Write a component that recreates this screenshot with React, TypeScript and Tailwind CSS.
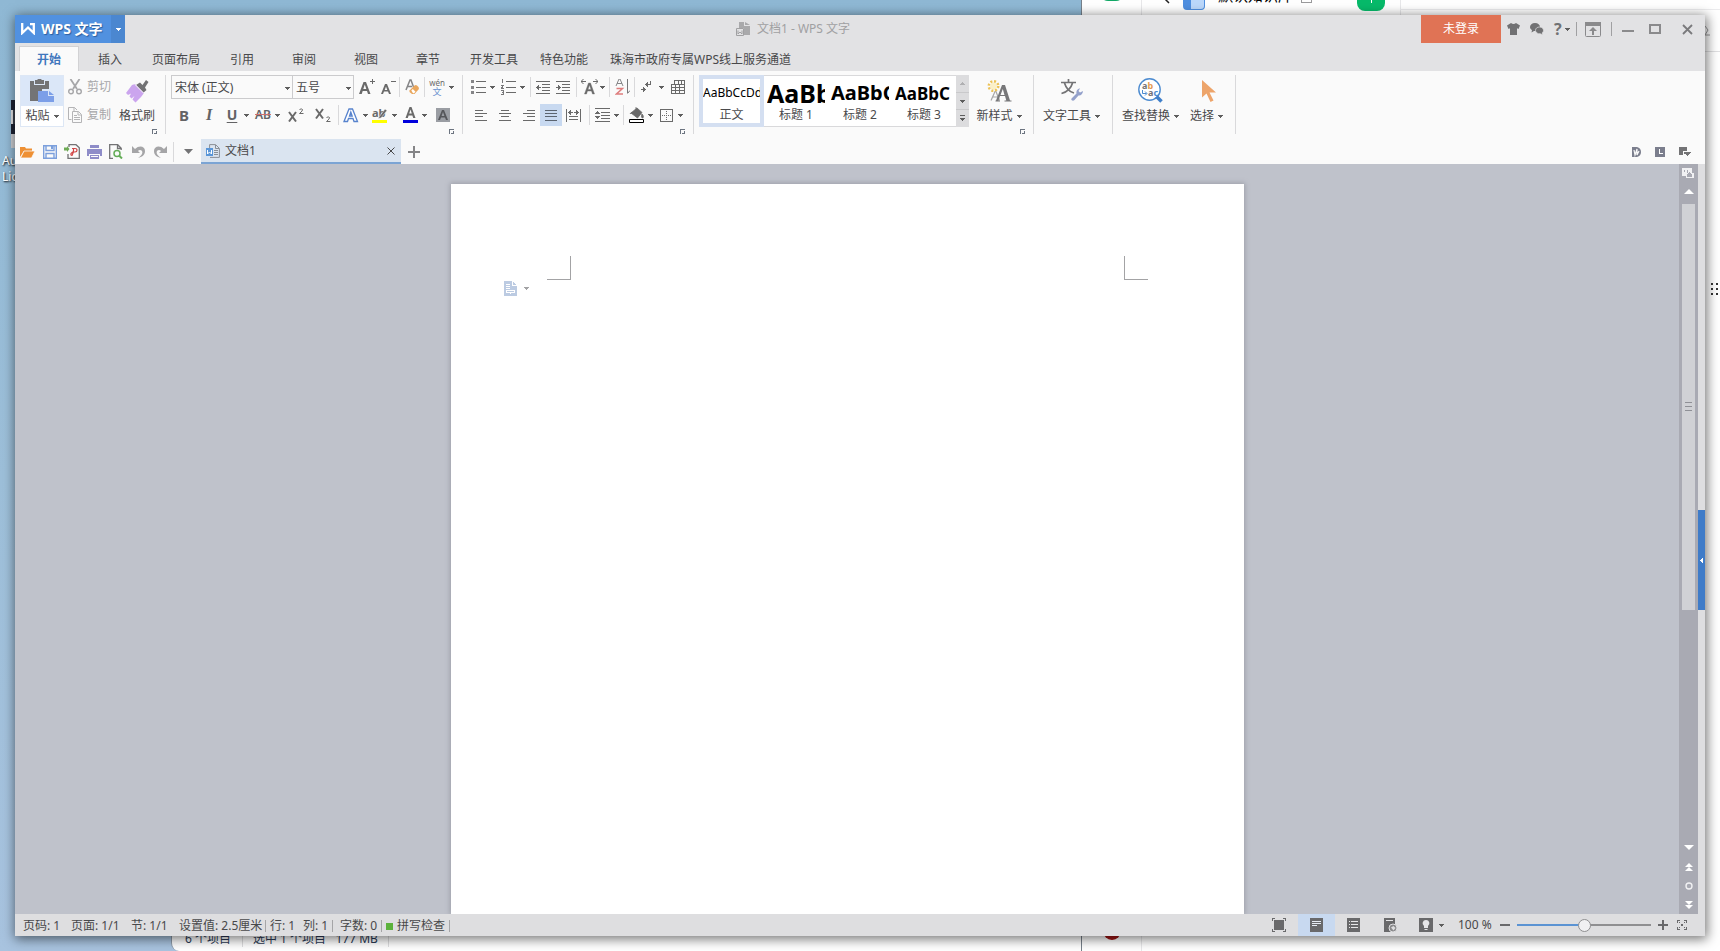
import type { ReactNode } from "react";

/* ---------- shared pieces ---------- */

type IconProps = { w: number; h: number; crisp?: boolean; className?: string; children: ReactNode };

function Icon({ w, h, crisp, className = "", children }: IconProps) {
  return (
    <svg
      width={w}
      height={h}
      viewBox={`0 0 ${w} ${h}`}
      fill="none"
      shapeRendering={crisp ? "crispEdges" : "auto"}
      className={`shrink-0 ${className}`}
      aria-hidden="true"
    >
      {children}
    </svg>
  );
}

function Caret({ className = "text-[#5e5e5e]" }: { className?: string }) {
  return (
    <Icon w={5} h={3} crisp className={className}>
      <path d="M0 0h5v1H0zM1 1h3v1H1zM2 2h1v1H2z" fill="currentColor" />
    </Icon>
  );
}

function Tool({ label, className = "", children }: { label: string; className?: string; children: ReactNode }) {
  return (
    <button aria-label={label} className={`flex h-[22px] w-[22px] shrink-0 items-center justify-center ${className}`}>
      {children}
    </button>
  );
}

function Drop({ label }: { label: string }) {
  return (
    <button aria-label={label} className="flex h-[22px] w-[7px] shrink-0 items-center justify-center">
      <Caret />
    </button>
  );
}

function Sep({ className = "" }: { className?: string }) {
  return <span className={`mx-px h-5 w-px shrink-0 bg-[#d9d9db] ${className}`} />;
}

function Launcher({ label }: { label: string }) {
  return (
    <button aria-label={label} className="mt-0.5 mr-2 flex h-[5px] self-end">
      <Icon w={5} h={5} crisp>
        <path d="M0 5V0h5v1H1v4zM4 2h1v3H2V4h2z" fill="#6c7480" />
      </Icon>
    </button>
  );
}

function Group({ className, launcher, children }: { className: string; launcher?: string; children: ReactNode }) {
  return (
    <section className={`flex h-[59px] shrink-0 flex-col border-r border-[#d9d9db] ${className}`}>
      {children}
      {launcher && <Launcher label={launcher} />}
    </section>
  );
}

function BigTool({ label, caret, className = "", children }: { label: string; caret?: boolean; className?: string; children: ReactNode }) {
  return (
    <button className={`flex h-[51px] shrink-0 flex-col items-center whitespace-nowrap ${className}`}>
      <span className="flex h-[31px] items-center justify-center">{children}</span>
      <span className="flex h-5 items-center gap-1">
        {label}
        {caret && <Caret />}
      </span>
    </button>
  );
}

/* ---------- title bar ---------- */

const tabs = ["插入", "页面布局", "引用", "审阅", "视图", "章节", "开发工具", "特色功能", "珠海市政府专属WPS线上服务通道"];

function TitleBar() {
  return (
    <header className="shrink-0 bg-[#e2e2e4]">
      <div className="flex h-7 items-stretch">
        <button className="flex w-24 shrink-0 items-center gap-1.5 bg-[#5191e0] pl-1.5 font-bold text-white">
          <Icon w={14} h={12}>
            <path d="M1.200 0v10L7 4.500l5.800 5.500V1H9" stroke="#fff" strokeWidth="2.300" />
          </Icon>
          <span className="text-sm whitespace-nowrap [text-shadow:1px_1px_1px_#2b5f9f]">WPS 文字</span>
        </button>
        <button aria-label="应用菜单" className="flex w-3.5 shrink-0 items-center justify-center bg-[#4b87d0]">
          <Caret className="text-white" />
        </button>
        <div className="flex flex-1 items-center justify-center gap-[7px] pl-10 text-[#a0a0a2]">
          <Icon w={14} h={14}>
            <path d="M3 0h5v4h3v9H8V6H3z" fill="#a9a9ab" />
            <path d="M9 0v3h5zM9 4h5v9H9z" fill="#a9a9ab" />
            <path d="M.5 6.500h7v7h-7z" fill="#e2e2e4" stroke="#a0a0a2" />
            <path d="M2 8.500v3.500l2-2 2 2V8.500" stroke="#a0a0a2" />
          </Icon>
          <h1>文档1 - WPS 文字</h1>
        </div>
        <button className="w-20 shrink-0 bg-[#e07355] text-white">未登录</button>
        <div className="flex w-[204px] shrink-0 items-center pl-1.5">
          <button aria-label="皮肤">
            <Icon w={13} h={12}>
              <path d="M4 0q2.500 2.200 5 0l4 2.500-1.500 3.500-1.500-.8V12H3V5.200L1.500 6 0 2.500z" fill="#717173" />
            </Icon>
          </button>
          <button aria-label="反馈" className="ml-2.5">
            <Icon w={14} h={12}>
              <path d="M5 0c3 0 5 1.800 5 4S8 8 5 8L4 7.900 1.500 9.500 2 7C.8 6.400 0 5.300 0 4c0-2.200 2-4 5-4z" fill="#717173" />
              <path d="M9.500 4c2.500 0 4 1.500 4 3.400 0 1-.5 1.900-1.300 2.500l.3 2.100-2-1.200C7.800 11 5.500 9.600 5.500 7.400S7.300 4 9.500 4z" fill="#717173" stroke="#e2e2e4" strokeWidth=".7" />
            </Icon>
          </button>
          <button aria-label="帮助" className="ml-2.5 flex items-center gap-[3px] text-base font-bold text-[#717173]">
            ?<Caret />
          </button>
          <span className="ml-1.5 h-3.5 w-px bg-[#a0a0a2]" />
          <button aria-label="隐藏功能区" className="ml-2">
            <Icon w={16} h={15}>
              <rect x=".5" y=".5" width="15" height="14" rx="1" stroke="#8a8a8c" />
              <path d="M0 0h16v4H0zM7 13V9H4l4-4 4 4H9v4z" fill="#8a8a8c" />
            </Icon>
          </button>
          <span className="ml-2.5 h-3.5 w-px bg-[#a0a0a2]" />
          <button aria-label="最小化" className="ml-2.5">
            <Icon w={12} h={10} crisp><path d="M0 6h12v2H0z" fill="#8a8a8c" /></Icon>
          </button>
          <button aria-label="最大化" className="ml-[15px]">
            <Icon w={12} h={10} crisp><path d="M1 1h10v8H1z" stroke="#8a8a8c" strokeWidth="2" /></Icon>
          </button>
          <button aria-label="关闭" className="ml-[21px]">
            <Icon w={11} h={11}><path d="m1 1 9 9M10 1l-9 9" stroke="#7a7a7c" strokeWidth="1.800" /></Icon>
          </button>
        </div>
      </div>
      <nav className="flex h-7 items-end overflow-hidden pl-1">
        <button className="h-[25px] w-[60px] shrink-0 border border-b-0 border-[#d2d2d4] bg-[#fafafa] pt-0.5 font-bold text-[#3f77bd]">开始</button>
        {tabs.map((t) => (
          <button key={t} className="h-[25px] min-w-[62px] shrink-0 px-[11px] pt-0.5 whitespace-nowrap">
            {t}
          </button>
        ))}
      </nav>
    </header>
  );
}

/* ---------- ribbon ---------- */

function ClipboardGroup() {
  return (
    <Group className="w-[151px]" launcher="剪贴板设置">
      <div className="flex h-[52px] pl-[5px]">
        <button className="flex h-[52px] w-[44px] flex-col items-center border border-[#dde7f5] bg-white">
          <span className="flex h-[30px] w-full items-center justify-center bg-[#dbe7f8]">
            <Icon w={26} h={24}>
              <path d="M1 2h4v4h11V2h4v8h-7v12H1z" fill="#737375" />
              <path d="M6 1h2.500a2 2 0 0 1 4 0H15v4H6z" fill="#737375" />
              <path d="M9 12h10v5h6v6H9z" fill="#7c9fe8" />
              <path d="M20 12l5 4h-5z" fill="#7c9fe8" />
            </Icon>
          </span>
          <span className="flex h-5 items-center gap-1 whitespace-nowrap">粘贴 <Caret /></span>
        </button>
        <div className="ml-1 flex w-12 flex-col gap-1 text-[#a7a7a9]">
          <button className="flex h-6 items-center gap-[5px] whitespace-nowrap">
            <Icon w={14} h={16}>
              <path d="M2.500 0 9 10M11.500 0 5 10" stroke="#a7a7a9" strokeWidth="1.800" />
              <circle cx="3" cy="12.500" r="2.300" stroke="#a7a7a9" strokeWidth="1.400" />
              <circle cx="11" cy="12.500" r="2.300" stroke="#a7a7a9" strokeWidth="1.400" />
            </Icon>
            剪切
          </button>
          <button className="flex h-6 items-center gap-[5px] whitespace-nowrap">
            <Icon w={14} h={16}>
              <path d="M3.500 12.500h-3V.5h6l2.500 2.500M6 .5V4" stroke="#b4b4b6" />
              <path d="M4.500 4.500h6l3 3v8h-9zM6 8.500h3M6 10.500h6M6 12.500h6M10 4.500V8h3" stroke="#b4b4b6" />
            </Icon>
            复制
          </button>
        </div>
        <BigTool label="格式刷" className="w-[42px]">
          <Icon w={24} h={24}>
            <path d="m11 6 4-2.500L17.500 6l3.500-5 2.500 2-3.500 5.500L21.500 11 18 14z" fill="#737375" />
            <path d="m7 6 3-1 9 9-3 4-5.500 5.500-3-3 2-3.500-3 2.500-2-2 1.500-3-3 1.500L1 14z" fill="#cba5ee" />
            <path d="m10 5.500 9 9" stroke="#fafafa" />
          </Icon>
        </BigTool>
      </div>
    </Group>
  );
}

function FontGroup() {
  return (
    <Group className="w-[297px] pl-[5px]" launcher="字体设置">
      <div className="flex flex-col gap-1">
        <div className="flex h-6 items-center">
          <label className="relative flex">
            <select aria-label="字体" className="h-6 w-[122px] appearance-none border border-[#cbcbcd] bg-[#fafafa] pt-px pl-[3px]">
              <option>宋体 (正文)</option>
            </select>
            <span className="pointer-events-none absolute top-3 right-[3px] flex"><Caret /></span>
          </label>
          <label className="relative -ml-px flex">
            <select aria-label="字号" className="h-6 w-[62px] appearance-none border border-[#cbcbcd] bg-[#fafafa] pt-px pl-[3px]">
              <option>五号</option>
            </select>
            <span className="pointer-events-none absolute top-3 right-[3px] flex"><Caret /></span>
          </label>
          <Tool label="增大字号" className="ml-0.5">
            <Icon w={16} h={18}>
              <path d="M0 16 4.500 4H7l4.500 12H9l-1-3H3.700l-1 3zM4.300 11h3L5.800 6.500z" fill="#6a6a6a" />
              <path d="M11 3.500h5M13.500 1v5" stroke="#6a6a6a" />
            </Icon>
          </Tool>
          <Tool label="减小字号" className="-mx-px">
            <Icon w={15} h={16}>
              <path d="M0 15 4 5h2l4 10H8l-1-2.500H3L2 15zM3.700 11h2.600L5 7.500z" fill="#6a6a6a" />
              <path d="M10 2.500h5" stroke="#6a6a6a" />
            </Icon>
          </Tool>
          <Sep />
          <Tool label="清除格式">
            <Icon w={15} h={16}>
              <path d="m1 11 4-10h1l2.500 7M2.500 7.500H7" stroke="#858587" strokeWidth="1.500" />
              <path d="m4.500 11.500 5-5a2 2 0 0 1 2.500 0l1.500 1.500a2 2 0 0 1 0 2.500l-4 4.500H7l-2.500-2z" fill="#e9a65c" />
              <path d="m6.300 11.500 1.500-1.500 2.700 2.700-1.500 1.500H8z" fill="#fff" />
            </Icon>
          </Tool>
          <Sep />
          <Tool label="拼音指南">
            <span className="flex flex-col items-center text-[#6a6a6a]">
              <span className="text-[8px] leading-[8px]">wén</span>
              <span className="text-[9px] leading-[9px] text-[#6b93d0]">文</span>
            </span>
          </Tool>
          <Drop label="拼音选项" />
        </div>
        <div className="flex h-6 items-center text-base leading-none font-bold text-[#636365]">
          <Tool label="加粗" className="ml-0.5 text-[15px]">B</Tool>
          <Tool label="倾斜" className="ml-[3px]"><i className="font-['Liberation_Serif',serif] font-bold">I</i></Tool>
          <Tool label="下划线" className="ml-px text-sm underline underline-offset-2">U</Tool>
          <Drop label="下划线选项" />
          <Tool label="删除线" className="ml-0.5 text-xs font-semibold line-through decoration-[#d07070]">AB</Tool>
          <Drop label="删除线选项" />
          <Tool label="上标" className="ml-1">
            <Icon w={16} h={14}>
              <path d="m1 4 7 9.500M8 4l-7 9.500" stroke="#6a6a6a" strokeWidth="2" />
              <path d="M11.500 1.500q2-1.200 3 0 .5 1.200-3 4h4" stroke="#6a6a6a" />
            </Icon>
          </Tool>
          <Tool label="下标" className="mr-[3px] ml-[5px]">
            <Icon w={16} h={14}>
              <path d="m1 1 7 9.500M8 1l-7 9.500" stroke="#6a6a6a" strokeWidth="2" />
              <path d="M11.500 9.500q2-1.200 3 0 .5 1.200-3 4h4" stroke="#6a6a6a" />
            </Icon>
          </Tool>
          <Sep />
          <Tool label="文字效果">
            <Icon w={16} h={15}>
              <path d="M1 13.500 6 1h3.500l5 12.500H11l-1-3H5.500l-1 3zM6.500 8h2.700L7.800 4z" fill="#fff" stroke="#5783cd" strokeWidth="1.300" />
            </Icon>
          </Tool>
          <Drop label="文字效果选项" />
          <Tool label="突出显示">
            <Icon w={16} h={16}>
              <text x="0" y="10" fontSize="11" fontWeight="700" fill="#6a6a6a">ab</text>
              <path d="m7 10 6-8 2 1.500-6 7.500-3 .5z" fill="#6a6a6a" stroke="#fafafa" strokeWidth=".5" />
              <path d="M0 13h15v3H0z" fill="#ffff00" />
            </Icon>
          </Tool>
          <Drop label="突出显示颜色" />
          <Tool label="字体颜色" className="ml-px">
            <Icon w={15} h={16}>
              <path d="M2.500 11 6.500 0h2l4 11h-2.300l-.8-2.500H5.600L4.800 11zM6.200 6.500h2.600L7.500 2.500z" fill="#6a6a6a" />
              <path d="M0 13h15v3H0z" fill="#0000dc" />
            </Icon>
          </Tool>
          <Drop label="字体颜色选项" />
          <Tool label="字符底纹" className="ml-1">
            <Icon w={14} h={14}>
              <path d="M0 0h14v14H0z" fill="#9a9da3" />
              <path d="M2 12 6 2h2l4 10h-2L9 9.500H5L4 12zM5.600 8h2.800L7 4z" fill="#55565a" />
            </Icon>
          </Tool>
        </div>
      </div>
    </Group>
  );
}

const G = "#6a6a6a";

function ParagraphGroup() {
  return (
    <Group className="w-[231px]" launcher="段落设置">
      <div className="flex flex-col gap-1">
        <div className="flex h-6 items-center">
          <Tool label="项目符号" className="ml-1">
            <Icon w={15} h={14} crisp>
              <path d="M5 1h10v1H5zM5 7h10v1H5zM5 12h10v1H5z" fill={G} />
              <path d="M0 0h3v3H0zM0 6h3v3H0zM0 11h3v3H0z" fill="#858587" />
            </Icon>
          </Tool>
          <Drop label="项目符号选项" />
          <Tool label="编号" className="ml-px">
            <Icon w={15} h={16} crisp>
              <path d="M5 2h10v1H5zM5 8h10v1H5zM5 13h10v1H5z" fill={G} />
              <path d="M1 0h1v4H1zM0 6h3v1H2v2h1v1H0V8h1V7H0zM0 11h3v5H0v-1h2v-1H1v-1h1v-1H0z" fill="#777779" />
            </Icon>
          </Tool>
          <Drop label="编号选项" />
          <Sep className="ml-1" />
          <Tool label="减少缩进" className="-mr-px">
            <Icon w={14} h={13} crisp>
              <path d="M0 0h14v1H0zM6 3h8v1H6zM6 6h8v1H6zM6 9h8v1H6zM0 12h14v1H0zM0 6h5v1H0zM1 5h1v3H1zM2 4h1v5H2z" fill={G} />
            </Icon>
          </Tool>
          <Tool label="增加缩进" className="-mx-px">
            <Icon w={14} h={13} crisp>
              <path d="M0 0h14v1H0zM6 3h8v1H6zM6 6h8v1H6zM6 9h8v1H6zM0 12h14v1H0zM0 6h5v1H0zM3 5h1v3H3zM2 4h1v5H2z" fill={G} />
            </Icon>
          </Tool>
          <Sep className="ml-[3px]" />
          <Tool label="中文版式" className="-mr-px">
            <Icon w={17} h={16}>
              <path d="m3.500 15 4-11h2l4 11h-2l-1-3h-4l-1 3zM7 10.500h3L8.500 6z" fill={G} stroke={G} strokeWidth=".4" />
              <path d="M0 2.500h5M2.500 0 0 2.500 2.500 5M12 2.500h5M14.500 0 17 2.500 14.500 5" stroke={G} />
            </Icon>
          </Tool>
          <Drop label="中文版式选项" />
          <Sep className="ml-[3px]" />
          <Tool label="排序">
            <Icon w={15} h={16}>
              <path d="m1 7 3-7h1l3 7M2 4.500h5" stroke="#858587" />
              <path d="M1.500 9.500h6L1.500 15H8" stroke="#de7d7d" strokeWidth="1.500" />
              <path d="M12.500 0v14M12.500 14.500l2.500-3" stroke="#777779" />
            </Icon>
          </Tool>
          <Sep />
          <Tool label="显示段落标记">
            <Icon w={12} h={14} crisp>
              <path d="M9 1h1v4H5V4h4zM4 4h1v1H4zM5 3h1v3H5zM6 2h1v5H6zM0 9h5v1H0zM2 7h1v5H2zM3 8h1v3H3z" fill={G} />
            </Icon>
          </Tool>
          <Drop label="段落标记选项" />
          <Tool label="表格" className="ml-0.5">
            <Icon w={14} h={14} crisp>
              <path d="M3 0h11v14H0V4h3zM4 1v3h3V1zM8 1v3h2V1zM11 1v3h2V1zM1 5v2h3V5zM5 5v2h3V5zM9 5v2h4V5zM1 8v2h3V8zM5 8v2h3V8zM9 8v2h4V8zM1 11v2h3v-2zM5 11v2h3v-2zM9 11v2h4v-2z" fill={G} fillRule="evenodd" />
            </Icon>
          </Tool>
        </div>
        <div className="flex h-6 items-center">
          <Tool label="左对齐" className="ml-[7px]">
            <Icon w={12} h={11} crisp><path d="M0 0h8v1H0zM0 3h12v1H0zM0 6h8v1H0zM0 10h12v1H0z" fill={G} /></Icon>
          </Tool>
          <Tool label="居中" className="ml-0.5">
            <Icon w={12} h={11} crisp><path d="M2 0h8v1H2zM0 3h12v1H0zM2 6h8v1H2zM0 10h12v1H0z" fill={G} /></Icon>
          </Tool>
          <Tool label="右对齐" className="ml-0.5">
            <Icon w={12} h={11} crisp><path d="M4 0h8v1H4zM0 3h12v1H0zM4 6h8v1H4zM0 10h12v1H0z" fill={G} /></Icon>
          </Tool>
          <Tool label="两端对齐" className="bg-[#c8d9f0]">
            <Icon w={12} h={11} crisp><path d="M0 0h12v1H0zM0 3h12v1H0zM0 6h12v1H0zM0 10h12v1H0z" fill="#5b6470" /></Icon>
          </Tool>
          <Tool label="分散对齐">
            <Icon w={15} h={13} crisp>
              <path d="M0 0h1v13H0zM14 0h1v13h-1zM2 3h5v1H2zM8 3h5v1H8zM3 2h1v3H3zM4 1h1v5H4zM11 2h1v3h-1zM10 1h1v5h-1zM3 7h9v1H3zM3 10h9v1H3z" fill={G} />
            </Icon>
          </Tool>
          <Sep className="ml-[5px]" />
          <Tool label="行距">
            <Icon w={15} h={14} crisp>
              <path d="M0 0h15v1H0zM6 4h9v1H6zM6 7h9v1H6zM6 10h9v1H6zM0 13h15v1H0zM2 3h1v3H2zM1 4h3v1H1zM0 5h5v1H0zM0 8h5v1H0zM1 9h3v1H1zM2 10h1v1H2z" fill={G} />
            </Icon>
          </Tool>
          <Drop label="行距选项" />
          <Sep className="ml-[3px]" />
          <Tool label="底纹颜色">
            <Icon w={15} h={16}>
              <path d="m2 6 6-5 5 4.500L8.500 11zM1 7c1-2 2.500-2 3-1M13 7c2 2 1.500 4 .5 4S12 9 13 7zM7 0v4" fill={G} stroke={G} strokeWidth=".8" />
              <path d="M.5 12.500h14v3H.5z" fill="#fff" stroke="#000" />
            </Icon>
          </Tool>
          <Drop label="底纹选项" />
          <Tool label="边框" className="ml-px">
            <Icon w={13} h={13} crisp>
              <path d="M0 0h13v13H0zM1 1v11h11V1z" fill={G} fillRule="evenodd" />
              <path d="M6 2h1v1H6zM6 4h1v1H6zM6 6h1v1H6zM6 8h1v1H6zM6 10h1v1H6zM2 6h1v1H2zM4 6h1v1H4zM8 6h1v1H8zM10 6h1v1h-1z" fill={G} />
            </Icon>
          </Tool>
          <Drop label="边框选项" />
        </div>
      </div>
    </Group>
  );
}

const headings = [
  { name: "标题 1", sample: "AaBb", size: "text-[25px]" },
  { name: "标题 2", sample: "AaBbC", size: "text-xl" },
  { name: "标题 3", sample: "AaBbC", size: "text-[17px]" },
];

function StylesGroup() {
  return (
    <Group className="w-[340px] pl-[5px]" launcher="样式设置">
      <div className="flex h-[52px]">
        <div className="flex h-[52px] shrink-0 text-black">
          <button className="flex w-[65px] flex-col items-center overflow-hidden border-4 border-[#d4dff1] bg-white">
            <span className="flex h-[28px] w-full items-center whitespace-nowrap">AaBbCcDd</span>
            <span className="flex h-4 items-center text-[#4a4a4c]">正文</span>
          </button>
          {headings.map((h) => (
            <button key={h.name} className="flex w-16 flex-col items-center border-y border-[#d9d9db] bg-white px-[3px] pt-[3px]">
              <span className={`flex h-[28px] w-full items-center overflow-hidden leading-none font-bold whitespace-nowrap ${h.size}`}>{h.sample}</span>
              <span className="flex h-4 items-center text-[#4a4a4c]">{h.name}</span>
            </button>
          ))}
          <div className="flex w-[13px] flex-col gap-px bg-[#c9c9cb]">
            <button aria-label="上一行" className="flex flex-1 items-center justify-center bg-[#dcdcde]">
              <Icon w={5} h={3} crisp><path d="M2 0h1v1H2zM1 1h3v1H1zM0 2h5v1H0z" fill="#b0b0b2" /></Icon>
            </button>
            <button aria-label="下一行" className="flex flex-1 items-center justify-center bg-[#dcdcde]"><Caret /></button>
            <button aria-label="更多样式" className="flex flex-1 items-center justify-center bg-[#dcdcde]">
              <Icon w={5} h={7} crisp><path d="M0 0h5v1H0zM0 3h5v1H0zM1 4h3v1H1zM2 5h1v1H2z" fill="#5e5e5e" /></Icon>
            </button>
          </div>
        </div>
        <BigTool label="新样式" caret className="ml-[5px] w-[50px]">
          <Icon w={25} h={22}>
            <path d="m4 20.500 4-9h1l3.500 9M6 17h5" stroke="#a5a5a7" strokeWidth="1.200" />
            <path d="M9 20.500 15 5h3l5 15.500h1.500v1h-7v-1h1.800L18 16h-5l-1.500 4.500h1.500v1H8.500v-1zM13.500 15h4L15.800 9z" fill="#777779" />
            <circle cx="6.500" cy="6" r="3.500" fill="#fbf0c8" />
            <circle cx="6.500" cy="6" r="4.800" stroke="#ecc255" strokeWidth="2.400" strokeDasharray="2 1.770" />
          </Icon>
        </BigTool>
      </div>
    </Group>
  );
}

function Ribbon() {
  return (
    <div className="flex h-[68px] shrink-0 overflow-hidden bg-[#fafafa] pt-1">
      <ClipboardGroup />
      <FontGroup />
      <ParagraphGroup />
      <StylesGroup />
      <Group className="w-[79px] pl-[9px]">
        <BigTool label="文字工具" caret className="self-start">
          <Icon w={24} h={24}>
            <path d="M1 3.500h15M8.500 0v3M12.500 4C11 9.500 7 13 1.500 14.500M4.500 4C6 9 10 13 14 14" stroke="#737375" strokeWidth="1.700" />
            <path d="m12 19 4.500-4.500c-.5-2.500 1-5 3.500-5l-1.500 2.500 1.500 1.500 3-1.500c0 3-2.500 5-4.500 4.500L14.500 21q-1.500 1.500-3 0-.8-1 .5-2z" fill="#94a1cb" />
          </Icon>
        </BigTool>
      </Group>
      <Group className="w-[123px]">
        <div className="flex gap-[11px] pl-[9px]">
          <BigTool label="查找替换" caret>
            <Icon w={25} h={25}>
              <circle cx="11.500" cy="11.500" r="10.700" fill="#fff" stroke="#4c8bd0" strokeWidth="1.400" />
              <path d="m18.500 18.500 5 5" stroke="#3f7fc9" strokeWidth="3.500" />
              <text x="4" y="11" fontSize="9" fontWeight="700" fill="#737375">
                a<tspan fill="#e49a50">b</tspan>
              </text>
              <path d="M4.500 12v3.500h4M7 13.500l2 2-2 2" stroke="#4c8bd0" />
              <text x="10" y="18" fontSize="9" fontWeight="700" fill="#737375">
                a<tspan fill="#4c8bd0">c</tspan>
              </text>
            </Icon>
          </BigTool>
          <BigTool label="选择" caret>
            <Icon w={14} h={22} className="ml-[5px]">
              <path d="M0 0v17.500l4.500-4 4 8.500 3-1.500-4-8H14z" fill="#eda46a" />
            </Icon>
          </BigTool>
        </div>
      </Group>
    </div>
  );
}

/* ---------- quick access and document tabs ---------- */

function QuickBar() {
  return (
    <div className="flex h-[25px] shrink-0 items-center bg-[#fafafa] pl-0.5">
      <Tool label="打开" className="-ml-px">
        <Icon w={15} h={12}>
          <path d="M0 11V1h5l1 1.500h6V5H4z" fill="#ee9034" />
          <path d="M4 5h11l-3.500 7H.5z" fill="#ee9034" stroke="#fafafa" strokeWidth=".8" />
        </Icon>
      </Tool>
      <Tool label="保存" className="ml-px">
        <Icon w={14} h={14}>
          <path d="M.7.700h12.600v12.600H.7zM3 .7v4.800h8V.700M3 13V8.500h8V13" stroke="#7b9fdc" strokeWidth="1.400" />
          <path d="M8 1h2v3H8z" fill="#7b9fdc" />
        </Icon>
      </Tool>
      <Tool label="输出PDF">
        <Icon w={16} h={15}>
          <path d="M5 3V.7h7l3.300 3v10.600H4V10" stroke="#737375" strokeWidth="1.300" />
          <path d="M8 4.500h3q2 0 2 1.700T11 8H8.500L7 9.500q-.5 2 1 2L9.500 8V4.500" stroke="#d04545" strokeWidth="1.200" />
          <path d="M0 3.500h3V2l2.500 3L3 8V6.500H0z" fill="#6eaa55" />
        </Icon>
      </Tool>
      <Tool label="打印">
        <Icon w={15} h={14}>
          <path d="M3 0h9v3H3zM0 4h15v7h-2V9H2v2H0zM3 10h9v4H3z" fill="#8e8cc8" />
          <path d="M4 11.500h7" stroke="#fafafa" />
        </Icon>
      </Tool>
      <Tool label="打印预览">
        <Icon w={14} h={15}>
          <path d="M4 14.300H.7V.700h8l3.500 3.500V6M8.500 1v3.500H12" stroke="#737375" strokeWidth="1.300" />
          <circle cx="8" cy="9.500" r="3" stroke="#65ad58" strokeWidth="1.500" />
          <path d="m10 11.500 3 3" stroke="#65ad58" strokeWidth="2" />
        </Icon>
      </Tool>
      <Tool label="撤销">
        <Icon w={13} h={13}>
          <path d="M3 4c4-4 10-3 10 2 0 4-3 6-7 7 4-3 5-5 4-7-1-1.500-3-1.500-4 0L8 8H0V1z" fill="#a5a5a7" />
        </Icon>
      </Tool>
      <Tool label="恢复">
        <Icon w={13} h={13}>
          <path d="M10 4C6 0 0 1 0 6c0 4 3 6 7 7-4-3-5-5-4-7 1-1.500 3-1.500 4 0L5 8h8V1z" fill="#a5a5a7" />
        </Icon>
      </Tool>
      <Sep className="ml-0.5" />
      <button aria-label="自定义快速访问" className="flex w-[26px] items-center justify-center">
        <Icon w={9} h={5}><path d="M0 0h9L4.500 5z" fill="#737375" /></Icon>
      </button>
      <div className="flex h-[25px] w-[200px] items-center border-b-2 border-[#7ba4d4] bg-[#dae4f0] pt-px pr-1.5 pl-[5px]">
        <Icon w={14} h={14}>
          <path d="M3.600 4V.600h6l3.800 3.800v9H4M9.500 1v3.500H13M8 6.500h4M8 8.500h4M8 10.500h4" stroke="#8a8f96" />
          <path d="M0 4h7v8H0z" fill="#5a96d8" />
          <path d="M1.500 6v4l2-2 2 2V6" stroke="#fff" />
        </Icon>
        <a href="#doc" className="ml-[5px] flex-1 text-[#4a4a4c]">文档1</a>
        <button aria-label="关闭文档">
          <Icon w={8} h={8}><path d="m.5.500 7 7M7.500.500l-7 7" stroke="#48484a" /></Icon>
        </button>
      </div>
      <button aria-label="新建" className="ml-[7px]">
        <Icon w={12} h={12} crisp><path d="M5 0h2v12H5zM0 5h12v2H0z" fill="#858587" /></Icon>
      </button>
      <div className="ml-auto flex items-center gap-[14px] pr-3.5">
        <button aria-label="文档">
          <Icon w={9} h={10}>
            <path d="M0 0h5q4 1 4 5t-4 5H0z" fill="#7b7e8d" />
            <path d="m2 3 1 5 2-6 0 6 2-4" stroke="#fafafa" strokeWidth="1.200" />
          </Icon>
        </button>
        <button aria-label="历史">
          <Icon w={10} h={10} crisp><path d="M0 0h10v10H0z" fill="#7b7e8d" /><path d="M4 2h1v4h3v1H4z" fill="#fff" /></Icon>
        </button>
        <button aria-label="窗口列表">
          <Icon w={12} h={10} crisp><path d="M0 0h8v4H4v4H0zM5 5h7v1h-1v1h-1v1H9v1H8V8H7V7H5z" fill="#737375" /></Icon>
        </button>
      </div>
    </div>
  );
}

/* ---------- document area ---------- */

function Workspace() {
  return (
    <div className="flex min-h-0 flex-1 bg-[#bfc2cb]">
      <main id="doc" className="flex min-w-0 flex-1 justify-center overflow-hidden pt-5 pl-px">
        <article className="w-[793px] bg-white shadow-[0_0_5px_1px_#9c9fa9]">
          <div className="flex justify-between px-24 pt-[72px]">
            <span className="h-6 w-6 border-r border-b border-[#a3a3a5]" />
            <span className="h-6 w-6 border-b border-l border-[#a3a3a5]" />
          </div>
          <button aria-label="段落布局" className="mt-px ml-[53px] flex items-center gap-[7px]">
            <Icon w={13} h={15} crisp>
              <path d="M0 0h8v5h5v10H0zM9 1h1v1h1v1h1v1H9z" fill="#bccbe2" />
              <path d="M2 3h4v1H2zM2 5h4v1H2zM2 7h4v1H2zM2 9h9v3H7v1H6v-1H2zM3 10v1h7v-1z" fill="#fff" fillRule="evenodd" />
            </Icon>
            <Caret className="text-[#a3a3a5]" />
          </button>
        </article>
      </main>
      <div className="flex w-[19px] shrink-0 flex-col items-center bg-[#a9aab3] pt-1">
        <button aria-label="标尺" className="mr-0.5">
          <Icon w={12} h={11} crisp>
            <path d="M0 0h10v5h2v5H4V8H0zM2 2v2h1V2zM5 2v3h1V2z" fill="#f1f1f3" fillRule="evenodd" />
            <path d="M7 4h1v1h1v1h1v3H5V6h1V5h1z" fill="#a9aab3" />
          </Icon>
        </button>
        <button aria-label="向上滚动" className="mt-2.5">
          <Icon w={10} h={5}><path d="M0 5 5 0l5 5z" fill="#fff" /></Icon>
        </button>
        <div className="mt-[10px] w-[13px] flex-1">
          <div className="flex h-[64%] flex-col items-center justify-center gap-[3px] bg-[#d0d1d5]">
            <span className="h-px w-[7px] bg-[#8f9096]" />
            <span className="h-px w-[7px] bg-[#8f9096]" />
            <span className="h-px w-[7px] bg-[#8f9096]" />
          </div>
        </div>
        <button aria-label="向下滚动" className="flex h-[19px] items-center">
          <Icon w={10} h={5}><path d="M0 0h10L5 5z" fill="#fff" /></Icon>
        </button>
        <button aria-label="上一页" className="flex h-[19px] items-center">
          <Icon w={8} h={8}><path d="M0 4 4 0l4 4zM0 8l4-4 4 4z" fill="#fff" /></Icon>
        </button>
        <button aria-label="选择浏览对象" className="flex h-[19px] items-center">
          <Icon w={8} h={8}><circle cx="4" cy="4" r="3" stroke="#f1f1f3" strokeWidth="1.400" /></Icon>
        </button>
        <button aria-label="下一页" className="flex h-[19px] items-center">
          <Icon w={8} h={8}><path d="M0 0h8L4 4zM0 4h8L4 8z" fill="#fff" /></Icon>
        </button>
      </div>
      <div className="flex w-[7px] shrink-0 flex-col bg-[#dedee0] pt-[346px]">
        <button aria-label="展开任务窗格" className="flex h-[100px] items-center justify-center bg-[#3e7bc8]">
          <Icon w={3} h={5} crisp><path d="M2 0h1v5H2V4H1V3H0V2h1V1h1z" fill="#fff" /></Icon>
        </button>
      </div>
    </div>
  );
}

/* ---------- status bar ---------- */

function Bar() {
  return <span className="h-3 w-px shrink-0 bg-[#a5a5a7]" />;
}

function StatusBar() {
  return (
    <footer className="flex h-[22px] shrink-0 items-center justify-between bg-[#dedee0] pl-2 whitespace-nowrap">
      <div className="flex items-center pt-0.5">
        <span className="w-12">页码: 1</span>
        <span className="w-[60px]">页面: 1/1</span>
        <span className="w-12">节: 1/1</span>
        <span className="w-[86px]">设置值: 2.5厘米</span>
        <Bar />
        <span className="ml-1 w-[33px]">行: 1</span>
        <span className="w-[29px]">列: 1</span>
        <Bar />
        <span className="ml-[7px] w-[41px]">字数: 0</span>
        <Bar />
        <button className="mx-1 flex w-[59px] items-center gap-1">
          <span className="h-[7px] w-[7px] bg-[#5cb23c]" />
          拼写检查
        </button>
        <Bar />
      </div>
      <div className="flex h-full items-center">
        <button aria-label="全屏显示" className="mr-3">
          <Icon w={14} h={14} crisp>
            <path d="M2 2h10v10H2z" fill="#69696b" />
            <path d="M0 3V0h3v1H1v2zM11 0h3v3h-1V1h-2zM0 11h1v2h2v1H0zM13 11h1v3h-3v-1h2z" fill="#69696b" />
          </Icon>
        </button>
        <button aria-label="页面视图" className="flex h-full w-[37px] items-center justify-center bg-[#c8d9f0]">
          <Icon w={13} h={14} crisp><path d="M0 0h13v14H0z" fill="#69696b" /><path d="M2 3h9v1H2zM2 5h9v1H2zM2 7h5v1H2z" fill="#e6ebf3" /></Icon>
        </button>
        <button aria-label="大纲视图" className="flex h-full w-[37px] items-center justify-center">
          <Icon w={13} h={14} crisp><path d="M0 0h13v14H0z" fill="#69696b" /><path d="M2 3h1v1H2zM4 3h7v1H4zM2 6h1v1H2zM4 6h7v1H4zM2 9h1v1H2zM4 9h7v1H4z" fill="#e6e6e8" /></Icon>
        </button>
        <button aria-label="网页视图" className="flex h-full w-[37px] items-center justify-center">
          <Icon w={13} h={14}>
            <path d="M0 0h11v14H0z" fill="#69696b" />
            <path d="M2 2.500h7" stroke="#e6e6e8" />
            <circle cx="9" cy="10" r="4" fill="#8a8a8c" stroke="#dedee0" />
            <path d="M7 9.500 9.500 8l2 2-2 2.500z" fill="#dedee0" />
          </Icon>
        </button>
        <button aria-label="护眼模式" className="flex h-full w-[37px] items-center gap-[6px] pl-2.5">
          <Icon w={14} h={14}>
            <path d="M0 0h14v14H0z" fill="#69696b" />
            <path d="M7 2a3.300 3.300 0 0 1 2 6v2H5V8a3.300 3.300 0 0 1 2-6zM5.500 11h3v1h-3z" fill="#e6e6e8" />
          </Icon>
          <Caret />
        </button>
        <span className="ml-[12px] w-[42px]">100 %</span>
        <button aria-label="缩小">
          <Icon w={10} h={2} crisp><path d="M0 0h10v2H0z" fill="#69696b" /></Icon>
        </button>
        <input
          type="range"
          aria-label="显示比例"
          min={0}
          max={200}
          defaultValue={100}
          className="mx-[7px] h-0.5 w-[134px] appearance-none bg-[linear-gradient(to_right,#5b93d3_50%,#8f8f91_50%)] [&::-webkit-slider-thumb]:h-[13px] [&::-webkit-slider-thumb]:w-[13px] [&::-webkit-slider-thumb]:appearance-none [&::-webkit-slider-thumb]:rounded-full [&::-webkit-slider-thumb]:border [&::-webkit-slider-thumb]:border-[#8f8f91] [&::-webkit-slider-thumb]:bg-[#f0f0f2]"
        />
        <button aria-label="放大">
          <Icon w={10} h={10} crisp><path d="M4 0h2v10H4zM0 4h10v2H0z" fill="#69696b" /></Icon>
        </button>
        <button aria-label="适应窗口" className="mr-[18px] ml-[9px]">
          <Icon w={10} h={10} crisp>
            <path d="M0 0h3v1H1v2H0zM7 0h3v3H9V1H7zM0 7h1v2h2v1H0zM9 7h1v3H7V9h2zM2 2h1v1H2zM7 2h1v1H7zM2 7h1v1H2zM7 7h1v1H7zM4 4h2v2H4z" fill="#69696b" />
          </Icon>
        </button>
      </div>
    </footer>
  );
}

/* ---------- desktop behind the editor ---------- */

function Desktop() {
  return (
    <div className="absolute inset-0 overflow-hidden bg-[linear-gradient(to_bottom,#8fb8d4,#9dbfd9_50%,#a8c3df)]">
      <div className="absolute top-[100px] left-[11px] flex w-12 flex-col">
        <span className="h-2.5 bg-[#1d2233]" />
        <span className="h-3.5 border-l-2 border-[#e6e6e8] bg-[#3a3f4c]" />
        <span className="h-2.5 bg-[#1d2233]" />
        <span className="h-3.5 bg-[#d0d2d6]" />
      </div>
      <p className="absolute top-[153px] left-0.5 leading-4 text-white [text-shadow:1px_1px_2px_#000]">
        Au
        <br />
        Lic
      </p>
      <div className="absolute bottom-0 left-[171px] flex h-16 w-[911px] items-end rounded-bl-lg border-l border-[#8c9aa8] bg-white pb-1 pl-[13px] text-[#2b3a55]">
        <span className="mr-[11px]">6 个项目</span>
        <span className="border-x border-[#dedee0] px-2.5">选中 1 个项目&nbsp;&nbsp; 177 MB</span>
      </div>
      <div className="absolute inset-y-0 right-0 left-[1081px] border-l border-[#77808a] bg-white">
        <div className="h-full w-[60px] border-r border-[#e8e8ea]" />
        <span className="absolute -top-6 left-[18px] h-[25px] w-6 rounded-lg bg-[#12a866]" />
        <Icon w={8} h={12} className="absolute -top-2 left-[80px]"><path d="M7 0 2 6l5 5" stroke="#222" strokeWidth="1.500" /></Icon>
        <span className="absolute -top-3 left-[101px] h-[22px] w-[22px] rounded-sm border border-l-8 border-[#4f8fe0] bg-[#bcd8fb]" />
        <span className="absolute -top-[15px] left-[136px] text-[15px] leading-5 whitespace-nowrap text-black">默认知识库</span>
        <span className="absolute -top-1.5 left-[219px] h-[9px] w-[11px] border border-[#9a9a9c]" />
        <span className="absolute -top-4 left-[275px] flex h-[27px] w-7 justify-center rounded-lg bg-[#07ba6a]">
          <span className="h-[19px] w-px bg-white" />
        </span>
        <span className="absolute top-0 left-[318px] h-4 w-px bg-[#e8e8ea]" />
        <span className="absolute top-[9px] right-0 left-[318px] h-px bg-[#ececee]" />
        <span className="absolute top-[51px] right-0 h-px w-4 bg-[#e0e0e2]" />
        <Icon w={6} h={11} className="absolute top-[26px] right-[10px]"><path d="m1 0 3 4-3 5h5" stroke="#9a9a9c" /></Icon>
        <Icon w={8} h={12} crisp className="absolute top-[283px] right-px">
          <path d="M0 0h2v2H0zM5 0h2v2H5zM0 5h2v2H0zM5 5h2v2H5zM0 10h2v2H0zM5 10h2v2H5z" fill="#333" />
        </Icon>
        <span className="absolute bottom-[11px] left-[21px] h-[18px] w-[18px] rounded-full bg-[#a31515]" />
      </div>
    </div>
  );
}

export default function App() {
  return (
    <div className="relative h-screen overflow-hidden p-[15px] font-['Noto_Sans','Noto_Sans_CJK_SC',sans-serif] text-xs leading-4 text-[#48484a]">
      <Desktop />
      <div className="relative flex h-full flex-col shadow-[1px_2px_11px_1px_rgba(0,0,0,0.55)]">
        <TitleBar />
        <Ribbon />
        <QuickBar />
        <Workspace />
        <StatusBar />
      </div>
    </div>
  );
}
